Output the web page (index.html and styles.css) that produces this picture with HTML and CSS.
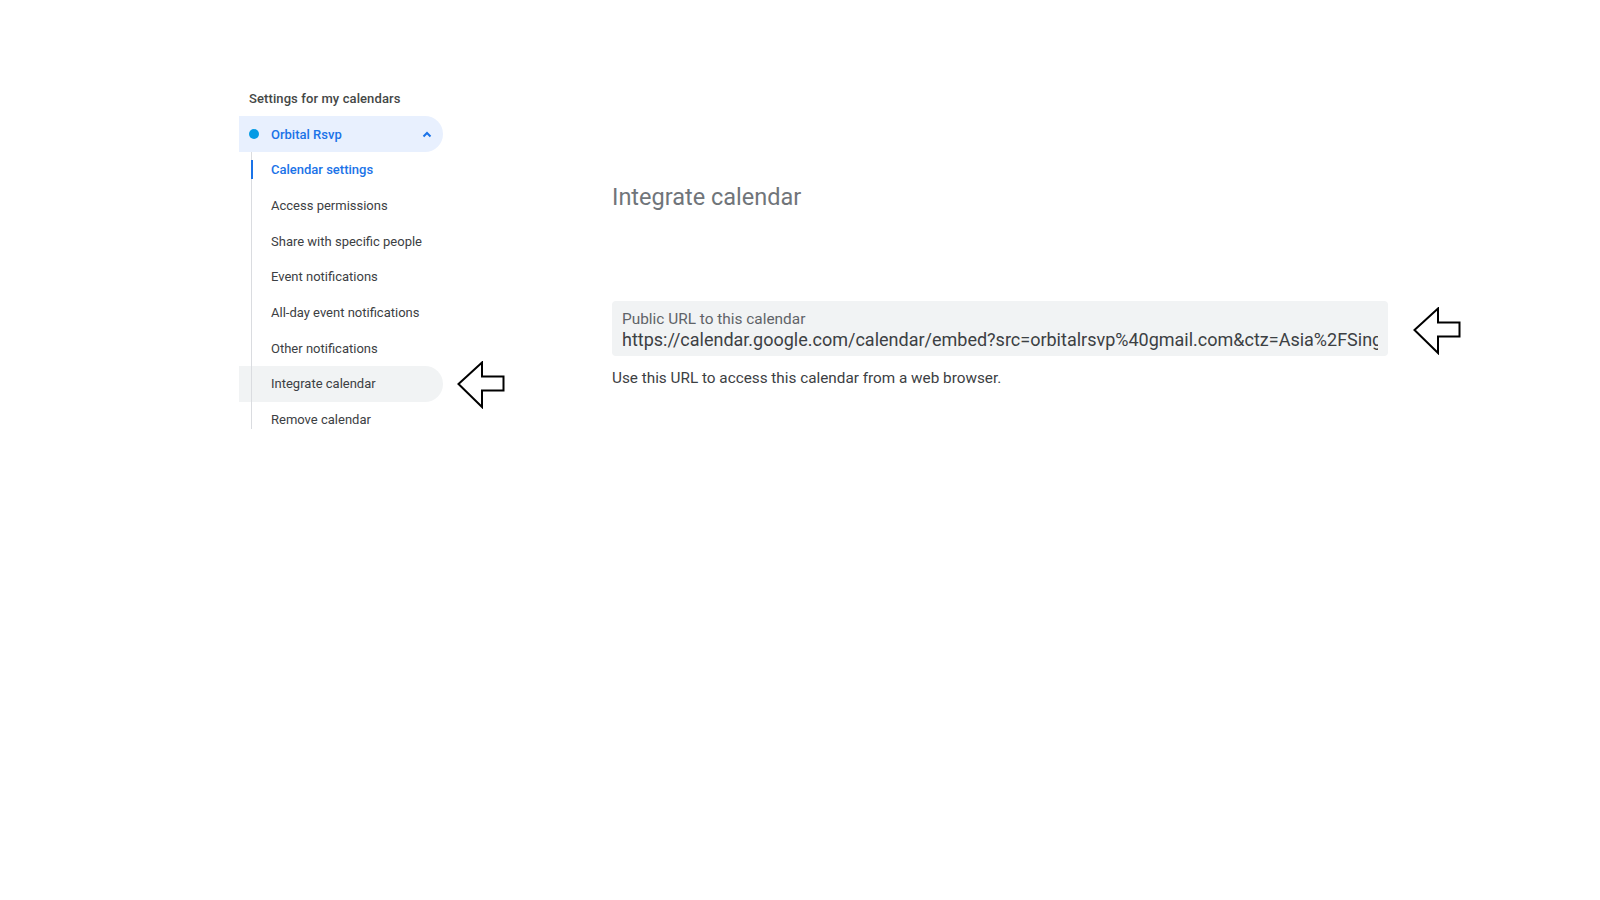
FILE: index.html
```html
<!DOCTYPE html>
<html>
<head>
<meta charset="utf-8">
<link rel="stylesheet" href="styles.css">
</head>
<body>
<div class="page">
  <nav class="sidebar">
    <div class="side-header">Settings for my calendars</div>
    <div class="cal-row">
      <span class="dot"></span>
      <span class="cal-name">Orbital Rsvp</span>
      <svg class="chev" width="12" height="8" viewBox="0 0 12 8"><path d="M2.5 6.5 L6 3 L9.5 6.5" fill="none" stroke="#1a73e8" stroke-width="2"/></svg>
    </div>
    <ul class="sublist">
      <li class="sub active">Calendar settings</li>
      <li class="sub">Access permissions</li>
      <li class="sub">Share with specific people</li>
      <li class="sub">Event notifications</li>
      <li class="sub">All-day event notifications</li>
      <li class="sub">Other notifications</li>
      <li class="sub selected">Integrate calendar
        <svg class="arrow arrow-side" width="48" height="48" viewBox="0 0 48 48"><polygon points="1.5,23 25,1.5 25,15.5 46.5,15.5 46.5,29.5 25,29.5 25,46" fill="#fff" stroke="#000" stroke-width="2"/></svg>
      </li>
      <li class="sub">Remove calendar</li>
    </ul>
  </nav>
  <main class="main">
    <h2 class="title">Integrate calendar</h2>
    <div class="url-row">
      <div class="url-box">
        <div class="url-label">Public URL to this calendar</div>
        <div class="url-value">https://calendar.google.com/calendar/embed?src=orbitalrsvp%40gmail.com&amp;ctz=Asia%2FSingapore</div>
      </div>
      <svg class="arrow arrow-main" width="48" height="48" viewBox="0 0 48 48"><polygon points="1.5,23 25,1.5 25,15.5 46.5,15.5 46.5,29.5 25,29.5 25,46" fill="#fff" stroke="#000" stroke-width="2"/></svg>
    </div>
    <p class="helper">Use this URL to access this calendar from a web browser.</p>
  </main>
</div>
</body>
</html>
```

FILE: styles.css
```css
html, body {
  margin: 0;
  padding: 0;
  background: #fff;
}
body {
  font-family: Roboto, "Liberation Sans", Arial, sans-serif;
  color: #3c4043;
}
.page {
  display: flex;
  padding: 80px 0 0 239px;
  gap: 169px;
}
.sidebar {
  width: 204px;
  flex: none;
}
.side-header {
  height: 36px;
  line-height: 38px;
  padding-left: 10px;
  font-size: 13px;
  font-weight: 500;
  color: #444746;
  letter-spacing: 0.1px;
}
.cal-row {
  height: 36px;
  display: flex;
  align-items: center;
  background: #e8f0fe;
  border-radius: 0 18px 18px 0;
  padding-left: 10px;
  padding-right: 10px;
}
.dot {
  width: 10px;
  height: 10px;
  border-radius: 50%;
  background: #039be5;
  flex: none;
}
.cal-name {
  margin-left: 12px;
  font-size: 13px;
  font-weight: 500;
  color: #1a73e8;
  flex: 1;
}
.sublist {
  list-style: none;
  margin: 0;
  padding: 0;
  position: relative;
}
.sublist::before {
  content: "";
  position: absolute;
  left: 12px;
  top: 0;
  bottom: 9px;
  width: 1px;
  background: #dadce0;
  z-index: 1;
}
.sub {
  position: relative;
  height: 35.7px;
  display: flex;
  align-items: center;
  padding-left: 32px;
  font-size: 13px;
  color: #3c4043;
}
.sub.active {
  color: #1a73e8;
  font-weight: 500;
}
.sub.active::before {
  content: "";
  position: absolute;
  left: 12px;
  top: 8px;
  width: 2px;
  height: 19px;
  background: #1a73e8;
  z-index: 2;
}
.sub.selected {
  background: #f1f3f4;
  border-radius: 0 18px 18px 0;
}
.arrow {
  display: block;
  flex: none;
}
.arrow-side {
  position: absolute;
  left: 218px;
  top: -5px;
}
.arrow-main {
  margin-top: 4px;
}
.main {
  padding-top: 103px;
  width: 776px;
  flex: none;
}
.title {
  margin: 0;
  font-size: 23.5px;
  line-height: 28px;
  font-weight: 400;
  color: #70757a;
}
.url-row {
  margin-top: 90px;
  display: flex;
  align-items: center;
  gap: 25px;
  width: 850px;
}
.url-box {
  width: 776px;
  flex: none;
  box-sizing: border-box;
  background: #f1f3f4;
  border-radius: 4px;
  padding: 9px 10px 4px 10px;
  overflow: hidden;
}
.url-label {
  font-size: 15.4px;
  line-height: 18px;
  color: #5f6368;
}
.url-value {
  font-size: 18px;
  line-height: 24px;
  color: #3c4043;
  white-space: nowrap;
  overflow: hidden;
}
.helper {
  margin: 12px 0 0;
  font-size: 15.3px;
  line-height: 20px;
  color: #3c4043;
}
```
